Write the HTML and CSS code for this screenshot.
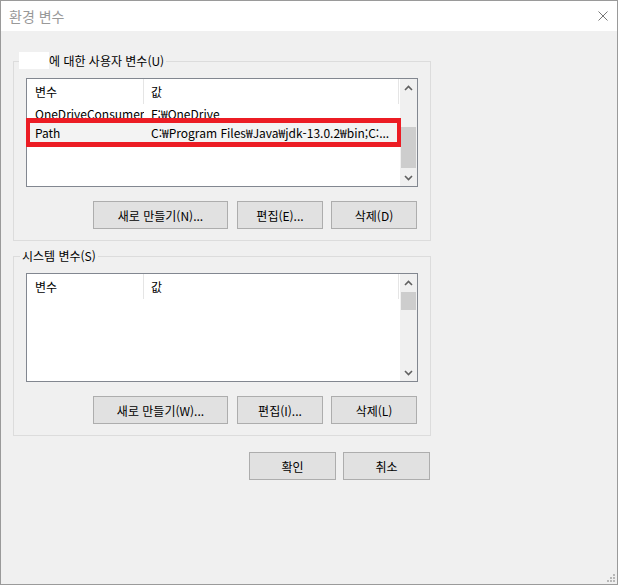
FILE: index.html
```html
<!DOCTYPE html>
<html lang="ko">
<head>
    <meta charset="UTF-8">
    <title>환경 변수</title>
    <link rel="stylesheet" href="styles.css">
</head>
<body>
    <div class="window">
        <div class="titlebar">
            <span class="title">환경 변수</span>
            <svg class="close" width="10" height="10" viewBox="0 0 10 10">
                <path d="M0.5 0.5 L9.5 9.5 M9.5 0.5 L0.5 9.5" stroke="#777" stroke-width="1" fill="none"/>
            </svg>
        </div>
        <div class="content">
            <div class="group">
                <div class="group-title"><span class="redact"></span>에 대한 사용자 변수(U)</div>
                <div class="list">
                    <div class="list-main">
                        <div class="list-head">
                            <div class="col-name">변수</div>
                            <div class="col-value">값</div>
                        </div>
                        <div class="row">
                            <div class="col-name">OneDriveConsumer</div>
                            <div class="col-value">F:₩OneDrive</div>
                        </div>
                        <div class="row row-path">
                            <div class="col-name">Path</div>
                            <div class="col-value">C:₩Program Files₩Java₩jdk-13.0.2₩bin;C:...</div>
                            <div class="mark"></div>
                        </div>
                    </div>
                    <div class="scrollbar">
                        <div class="arrow">
                            <svg width="9" height="6" viewBox="0 0 9 6"><path d="M1 5 L4.5 1.5 L8 5" stroke="#606060" stroke-width="1.6" fill="none"/></svg>
                        </div>
                        <div class="track"><div class="thumb thumb-user"></div></div>
                        <div class="arrow">
                            <svg width="9" height="6" viewBox="0 0 9 6"><path d="M1 1 L4.5 4.5 L8 1" stroke="#606060" stroke-width="1.6" fill="none"/></svg>
                        </div>
                    </div>
                </div>
                <div class="buttons">
                    <button class="btn btn-wide">새로 만들기(N)...</button>
                    <button class="btn">편집(E)...</button>
                    <button class="btn">삭제(D)</button>
                </div>
            </div>

            <div class="group group-system">
                <div class="group-title">시스템 변수(S)</div>
                <div class="list">
                    <div class="list-main">
                        <div class="list-head">
                            <div class="col-name">변수</div>
                            <div class="col-value">값</div>
                        </div>
                    </div>
                    <div class="scrollbar">
                        <div class="arrow">
                            <svg width="9" height="6" viewBox="0 0 9 6"><path d="M1 5 L4.5 1.5 L8 5" stroke="#606060" stroke-width="1.6" fill="none"/></svg>
                        </div>
                        <div class="track"><div class="thumb thumb-system"></div></div>
                        <div class="arrow">
                            <svg width="9" height="6" viewBox="0 0 9 6"><path d="M1 1 L4.5 4.5 L8 1" stroke="#606060" stroke-width="1.6" fill="none"/></svg>
                        </div>
                    </div>
                </div>
                <div class="buttons">
                    <button class="btn btn-wide">새로 만들기(W)...</button>
                    <button class="btn">편집(I)...</button>
                    <button class="btn">삭제(L)</button>
                </div>
            </div>

            <div class="footer">
                <button class="btn btn-dialog">확인</button>
                <button class="btn btn-dialog">취소</button>
            </div>
        </div>
        <svg class="grip" width="8" height="8" viewBox="0 0 8 8">
            <rect x="6" y="0" width="2" height="2" fill="#b8b8b8"/>
            <rect x="3" y="3" width="2" height="2" fill="#b8b8b8"/>
            <rect x="6" y="3" width="2" height="2" fill="#b8b8b8"/>
            <rect x="0" y="6" width="2" height="2" fill="#b8b8b8"/>
            <rect x="3" y="6" width="2" height="2" fill="#b8b8b8"/>
            <rect x="6" y="6" width="2" height="2" fill="#b8b8b8"/>
        </svg>
    </div>
</body>
</html>
```

FILE: styles.css
```css
body {
    margin: 0;
    font-family: "Noto Sans CJK KR", "Malgun Gothic", sans-serif;
    font-size: 12px;
    color: #000;
}
.window {
    position: relative;
    width: 616px;
    height: 583px;
    border: 1px solid #9a9a9a;
    background: #f0f0f0;
}
.titlebar {
    height: 30px;
    background: #fff;
    display: flex;
    align-items: center;
    justify-content: space-between;
    padding: 0 9px 0 8px;
}
.title {
    font-size: 14px;
    line-height: 18px;
    color: #999;
}
.content {
    padding-left: 12px;
}
.group {
    width: 392px;
    border: 1px solid #dcdcdc;
    margin-top: 30px;
    padding: 0 12px 11px;
}
.group-system {
    margin-top: 15px;
}
.group-title {
    display: flex;
    align-items: center;
    width: fit-content;
    height: 17px;
    line-height: 17px;
    margin: -10px 0 0 -6px;
    padding: 0 2px;
    background: #f0f0f0;
}
.redact {
    width: 30px;
    height: 17px;
    margin-left: -3px;
    background: #fff;
}
.list {
    display: flex;
    height: 107px;
    margin-top: 9px;
    border: 1px solid #828790;
    background: #fff;
}
.list-main {
    flex: 1;
}
.list-head {
    display: flex;
    height: 25px;
    line-height: 25px;
}
.list-head .col-name {
    width: 108px;
    border-right: 1px solid #e5e5e5;
}
.list-head .col-value {
    width: 247px;
    border-right: 1px solid #e5e5e5;
}
.col-name {
    padding-left: 8px;
    white-space: nowrap;
    overflow: hidden;
}
.col-value {
    padding-left: 7px;
    white-space: nowrap;
}
.row {
    display: flex;
    height: 19px;
    line-height: 19px;
}
.row .col-name {
    width: 109px;
}
.row-path {
    position: relative;
    background: #f3f3f3;
}
.mark {
    position: absolute;
    top: -5px;
    bottom: -5px;
    left: -1px;
    right: -1px;
    border: 5px solid #ec1c24;
    border-left-width: 4px;
    border-right-width: 4px;
}
.scrollbar {
    width: 17px;
    display: flex;
    flex-direction: column;
    background: #f0f0f0;
}
.arrow {
    height: 17px;
    display: flex;
    align-items: center;
    justify-content: center;
}
.track {
    flex: 1;
}
.thumb {
    margin: 0 1px;
    background: #cdcdcd;
}
.thumb-user {
    margin-top: 31px;
    height: 41px;
}
.thumb-system {
    margin-top: 1px;
    height: 18px;
}
.buttons {
    display: flex;
    justify-content: flex-end;
    gap: 8px;
    margin-top: 14px;
    padding-right: 1px;
}
.btn {
    height: 28px;
    width: 86px;
    padding: 0;
    border: 1px solid #adadad;
    background: #e1e1e1;
    font-family: inherit;
    font-size: 12px;
    color: #000;
}
.btn-wide {
    width: 135px;
    margin-right: 1px;
}
.footer {
    width: 417px;
    display: flex;
    justify-content: flex-end;
    gap: 7px;
    margin-top: 16px;
}
.btn-dialog {
    width: 87px;
}
.grip {
    position: absolute;
    right: 2px;
    bottom: 2px;
}
```
